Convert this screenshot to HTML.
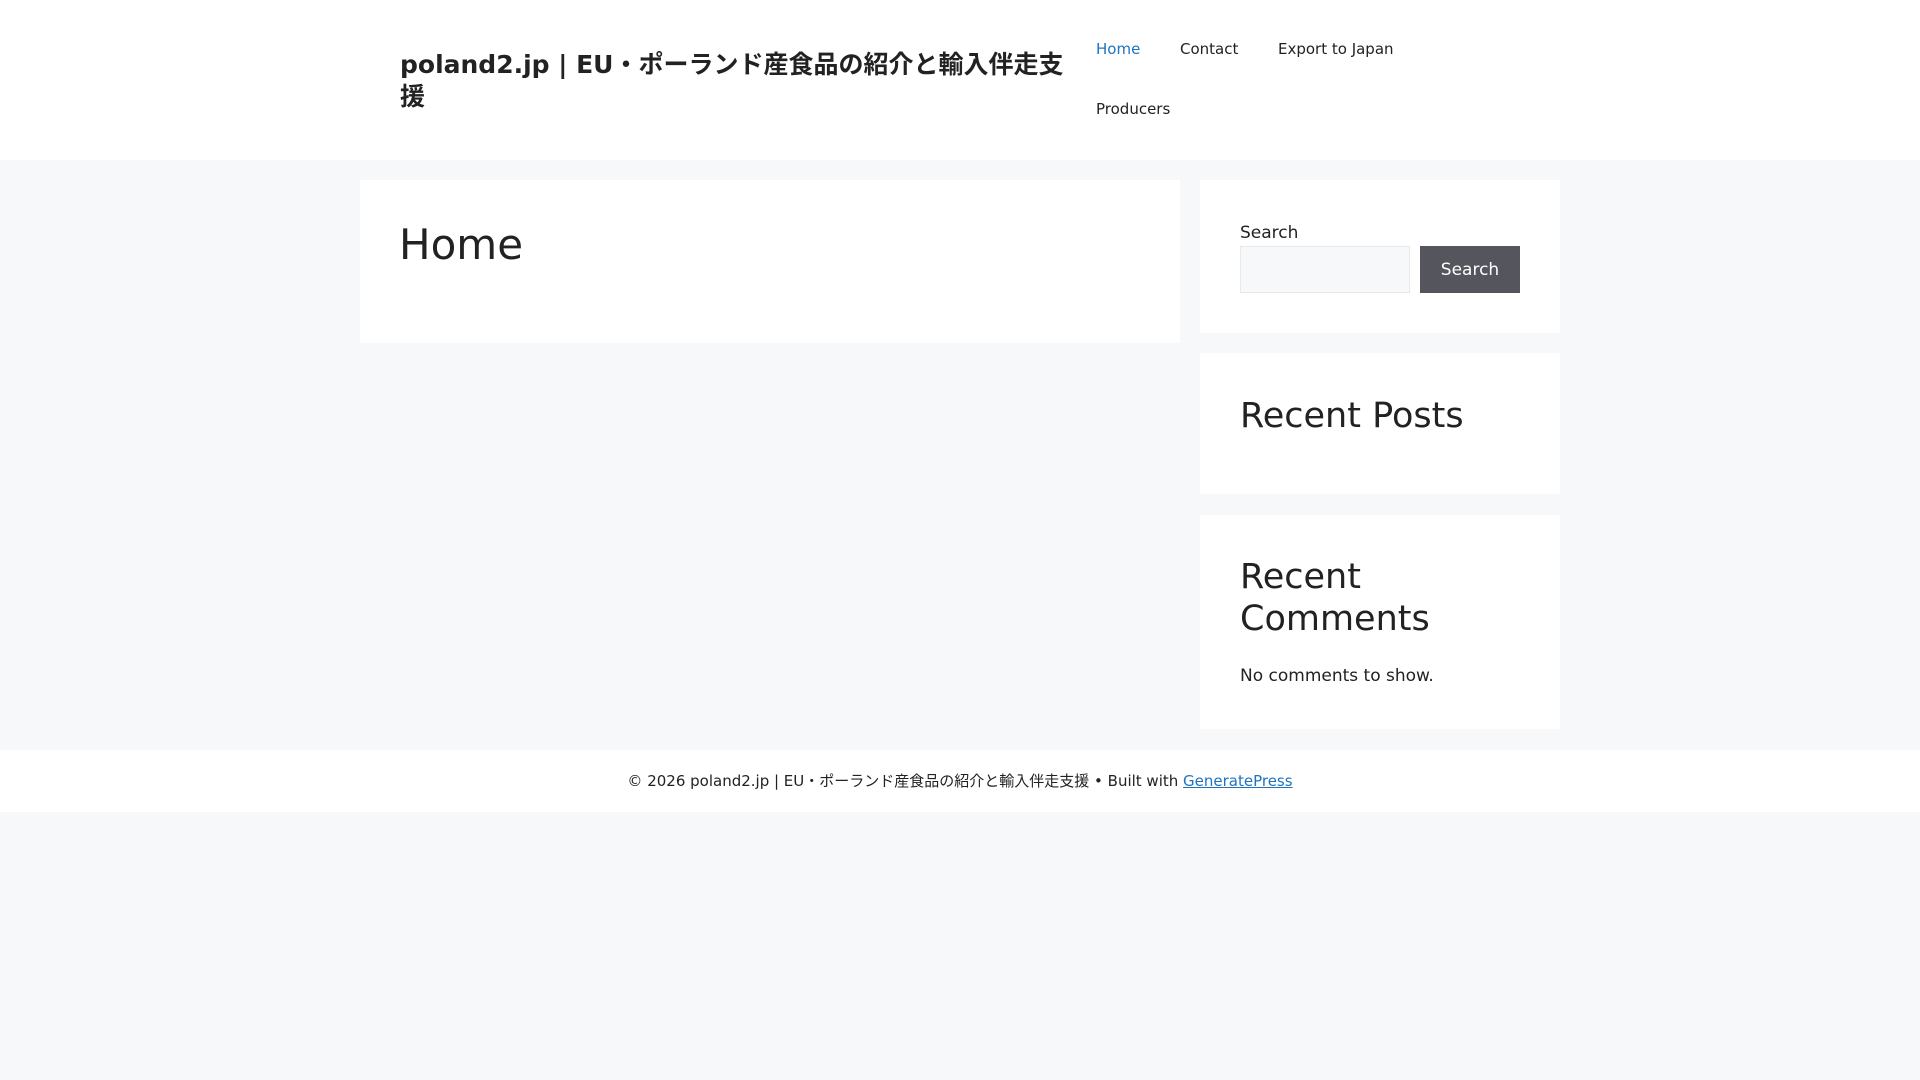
<!DOCTYPE html>
<html><head><meta charset="utf-8"><style>
*{margin:0;padding:0;box-sizing:border-box}
body{width:1920px;height:1080px;background:#f7f8f9;font-family:"DejaVu Sans","Noto Sans CJK JP",sans-serif;color:#222;position:relative;overflow:hidden}
.a{position:absolute}
.w{background:#fff}
a{color:#1e73be}
</style></head><body>
<div class="a w" style="left:0;top:0;width:1920px;height:160px"></div>
<div class="a" style="left:400px;top:49px;width:680px;font-size:25px;font-weight:bold;line-height:32px;color:#222">poland2.jp | EU・ポーランド産食品の紹介と輸入伴走支援</div>
<div class="a" style="left:1096px;top:40px;font-size:15px;color:#1e73be">Home</div>
<div class="a" style="left:1180px;top:40px;font-size:15px;color:#222">Contact</div>
<div class="a" style="left:1278px;top:40px;font-size:15px;color:#222">Export to Japan</div>
<div class="a" style="left:1096px;top:100px;font-size:15px;color:#222">Producers</div>

<div class="a w" style="left:360px;top:180px;width:820px;height:163px"></div>
<div class="a" style="left:399px;top:219px;font-size:42px;line-height:52px">Home</div>

<div class="a w" style="left:1200px;top:180px;width:360px;height:153px"></div>
<div class="a" style="left:1240px;top:223px;font-size:17px">Search</div>
<div class="a" style="left:1240px;top:246px;width:170px;height:47px;background:#f7f8f9;border:1px solid #e6e8ea"></div>
<div class="a" style="left:1420px;top:246px;width:100px;height:47px;background:#55555e;color:#fff;font-size:17px;line-height:49px;text-align:center">Search</div>

<div class="a w" style="left:1200px;top:353px;width:360px;height:141px"></div>
<div class="a" style="left:1240px;top:394px;font-size:35px;line-height:44px">Recent Posts</div>

<div class="a w" style="left:1200px;top:515px;width:360px;height:214px"></div>
<div class="a" style="left:1240px;top:556px;font-size:35px;line-height:42px">Recent<br>Comments</div>
<div class="a" style="left:1240px;top:666px;font-size:17px">No comments to show.</div>

<div class="a w" style="left:0;top:750px;width:1920px;height:62px"></div>
<div class="a" style="left:0;top:770px;width:1920px;text-align:center;font-size:15px;color:#222">© 2026 poland2.jp | EU・ポーランド産食品の紹介と輸入伴走支援 • Built with <a href="#">GeneratePress</a></div>
</body></html>
